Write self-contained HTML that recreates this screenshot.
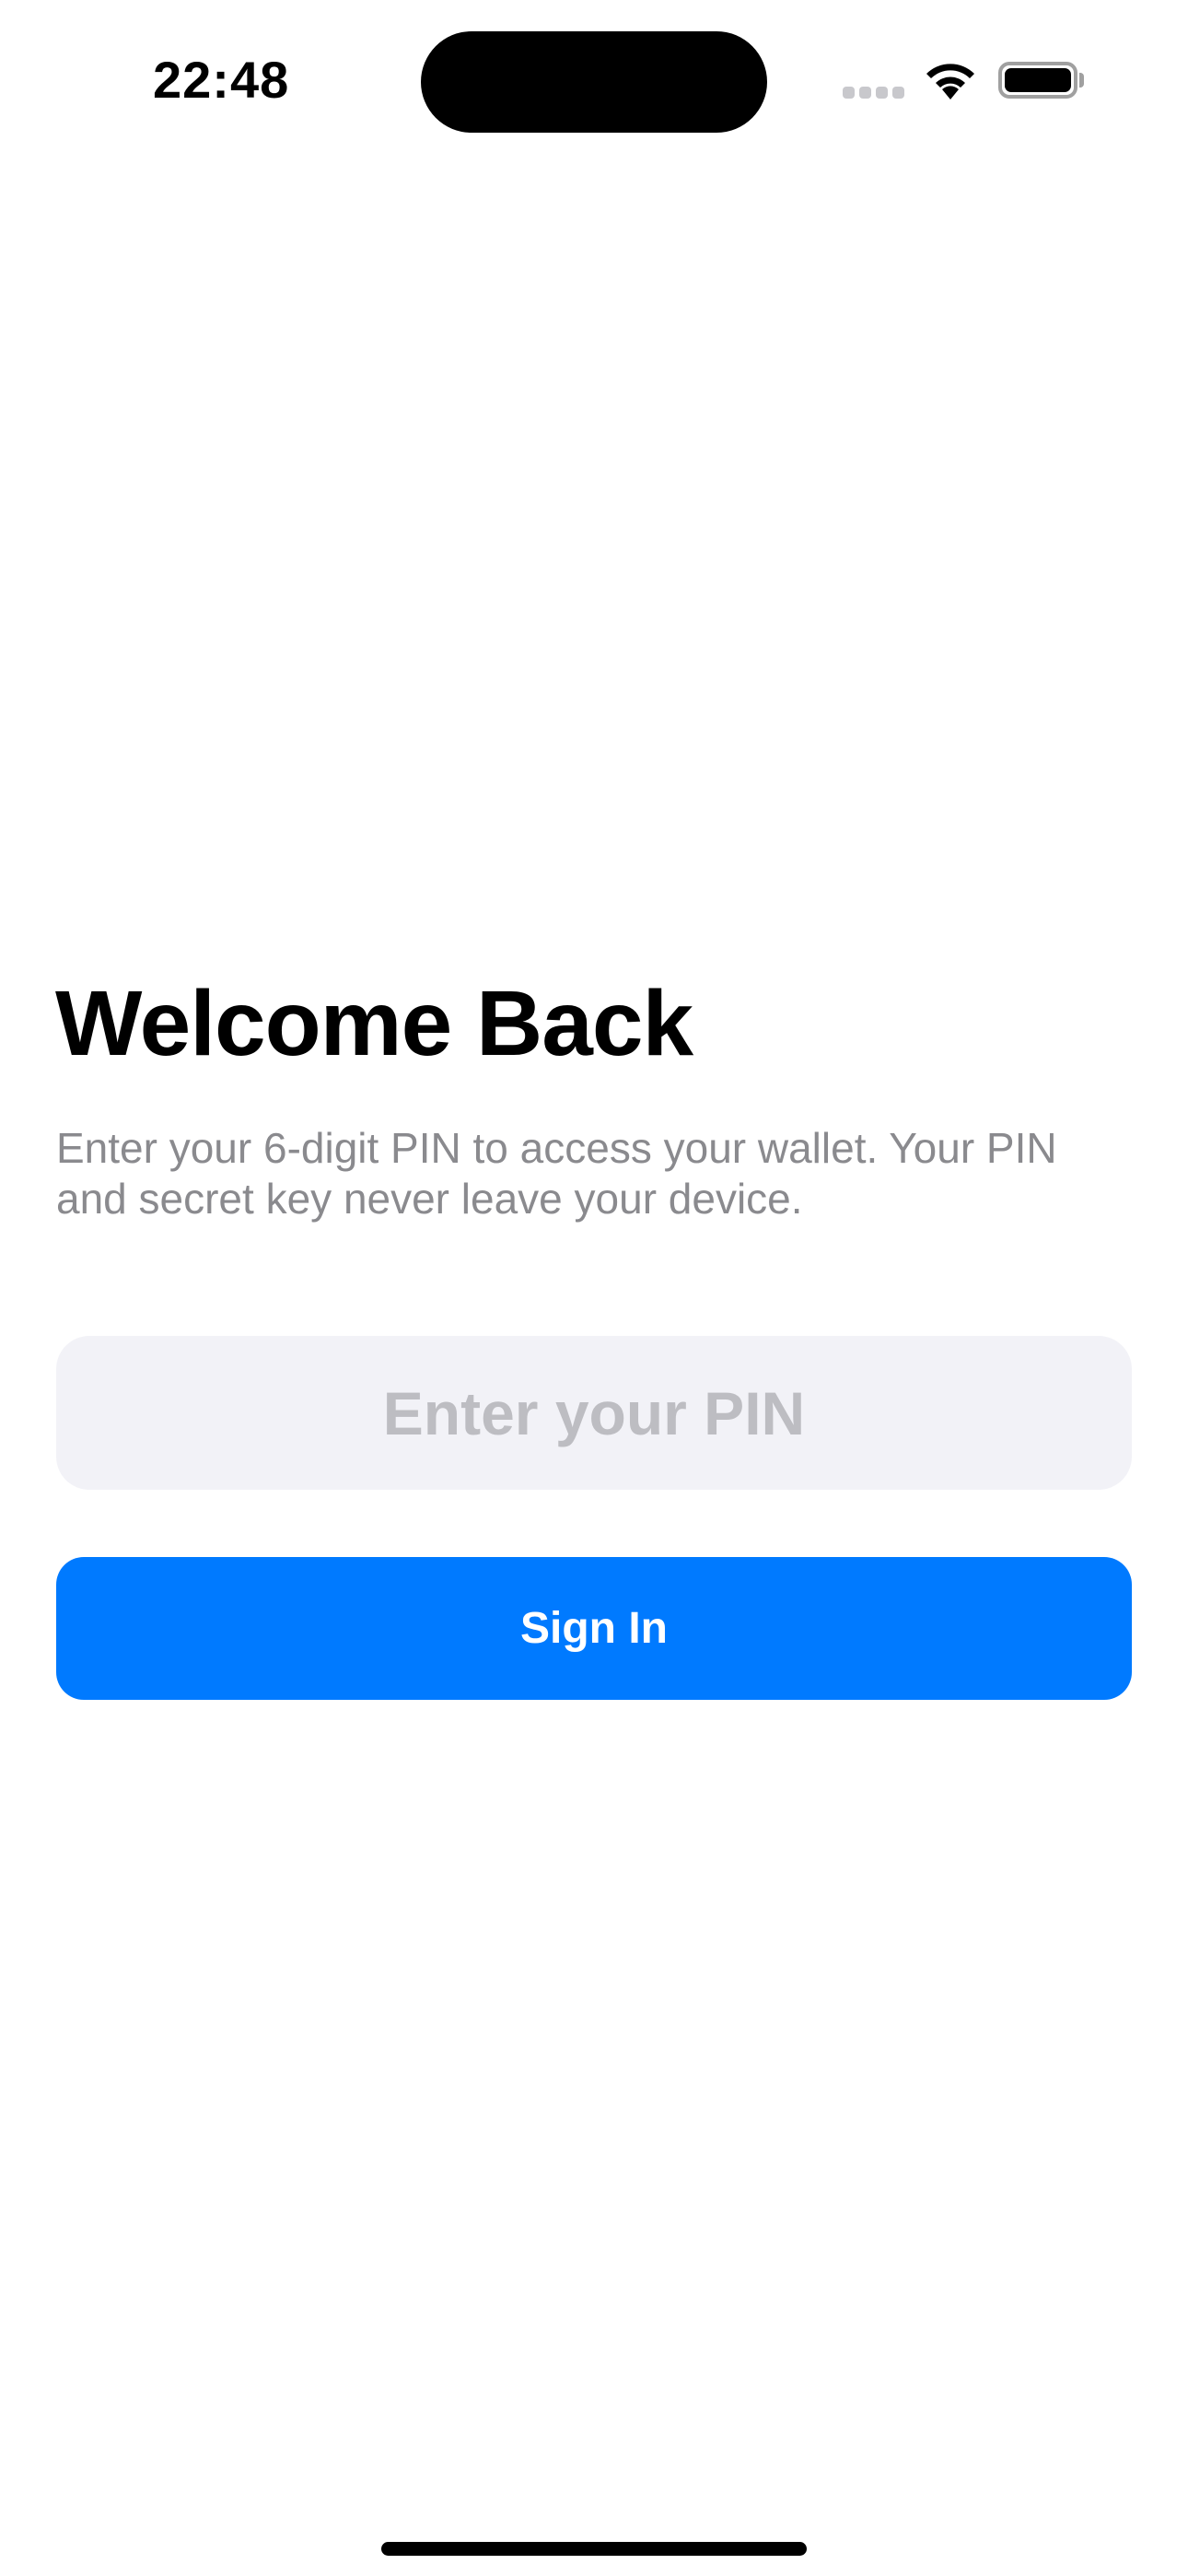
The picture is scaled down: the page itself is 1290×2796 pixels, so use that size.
<!DOCTYPE html>
<html><head><meta charset="utf-8"><style>
html,body{margin:0;padding:0;background:#fff;}
body{width:1290px;height:2796px;position:relative;overflow:hidden;font-family:"Liberation Sans",sans-serif;}
.a{position:absolute;}
</style></head><body>
<div class="a" style="left:166px;top:55px;font-size:56px;font-weight:bold;letter-spacing:1px;line-height:64px;">22:48</div>
<div class="a" style="left:457px;top:34px;width:376px;height:110px;border-radius:55px;background:#000;"></div>
<div class="a" style="left:915px;top:94px;width:13px;height:13px;border-radius:4px;background:#c8c8cc;"></div>
<div class="a" style="left:933px;top:94px;width:13px;height:13px;border-radius:4px;background:#c8c8cc;"></div>
<div class="a" style="left:951px;top:94px;width:13px;height:13px;border-radius:4px;background:#c8c8cc;"></div>
<div class="a" style="left:969px;top:94px;width:13px;height:13px;border-radius:4px;background:#c8c8cc;"></div>
<svg class="a" style="left:1003px;top:62px" width="58" height="48" viewBox="0 0 58 48"><path d="M29 46 L20 35 A13 13 0 0 1 38 35 Z" fill="#000"/><path d="M13 28 A23 23 0 0 1 45 28 L40 33 A16 16 0 0 0 18 33 Z" fill="#000"/><path d="M3 18 A37 37 0 0 1 55 18 L50 23 A30 30 0 0 0 8 23 Z" fill="#000"/></svg>
<div class="a" style="left:1084px;top:67px;border:4px solid #a0a0a0;border-radius:12px;box-sizing:border-box;width:86px;height:40px;"></div>
<div class="a" style="left:1091px;top:74px;width:72px;height:26px;border-radius:7px;background:#000;"></div>
<div class="a" style="left:1172px;top:79px;width:5px;height:16px;border-radius:0 4px 4px 0;background:#a0a0a0;"></div>

<div class="a" style="left:60px;top:1051px;font-size:100px;font-weight:bold;line-height:120px;letter-spacing:-1px;color:#000;">Welcome Back</div>
<div class="a" style="left:61px;top:1219px;width:1200px;font-size:46px;line-height:55px;color:#8a8a8e;white-space:nowrap;">Enter your 6-digit PIN to access your wallet. Your PIN<br>and secret key never leave your device.</div>
<div class="a" style="left:61px;top:1450px;width:1168px;height:167px;border-radius:36px;background:#f2f2f7;display:flex;align-items:center;justify-content:center;font-size:66px;font-weight:bold;color:#bdbdc2;">Enter your PIN</div>
<div class="a" style="left:61px;top:1690px;width:1168px;height:155px;border-radius:30px;background:#007aff;display:flex;align-items:center;justify-content:center;font-size:48px;font-weight:bold;color:#fff;">Sign In</div>
<div class="a" style="left:414px;top:2759px;width:462px;height:15px;border-radius:8px;background:#000;"></div>
</body></html>
